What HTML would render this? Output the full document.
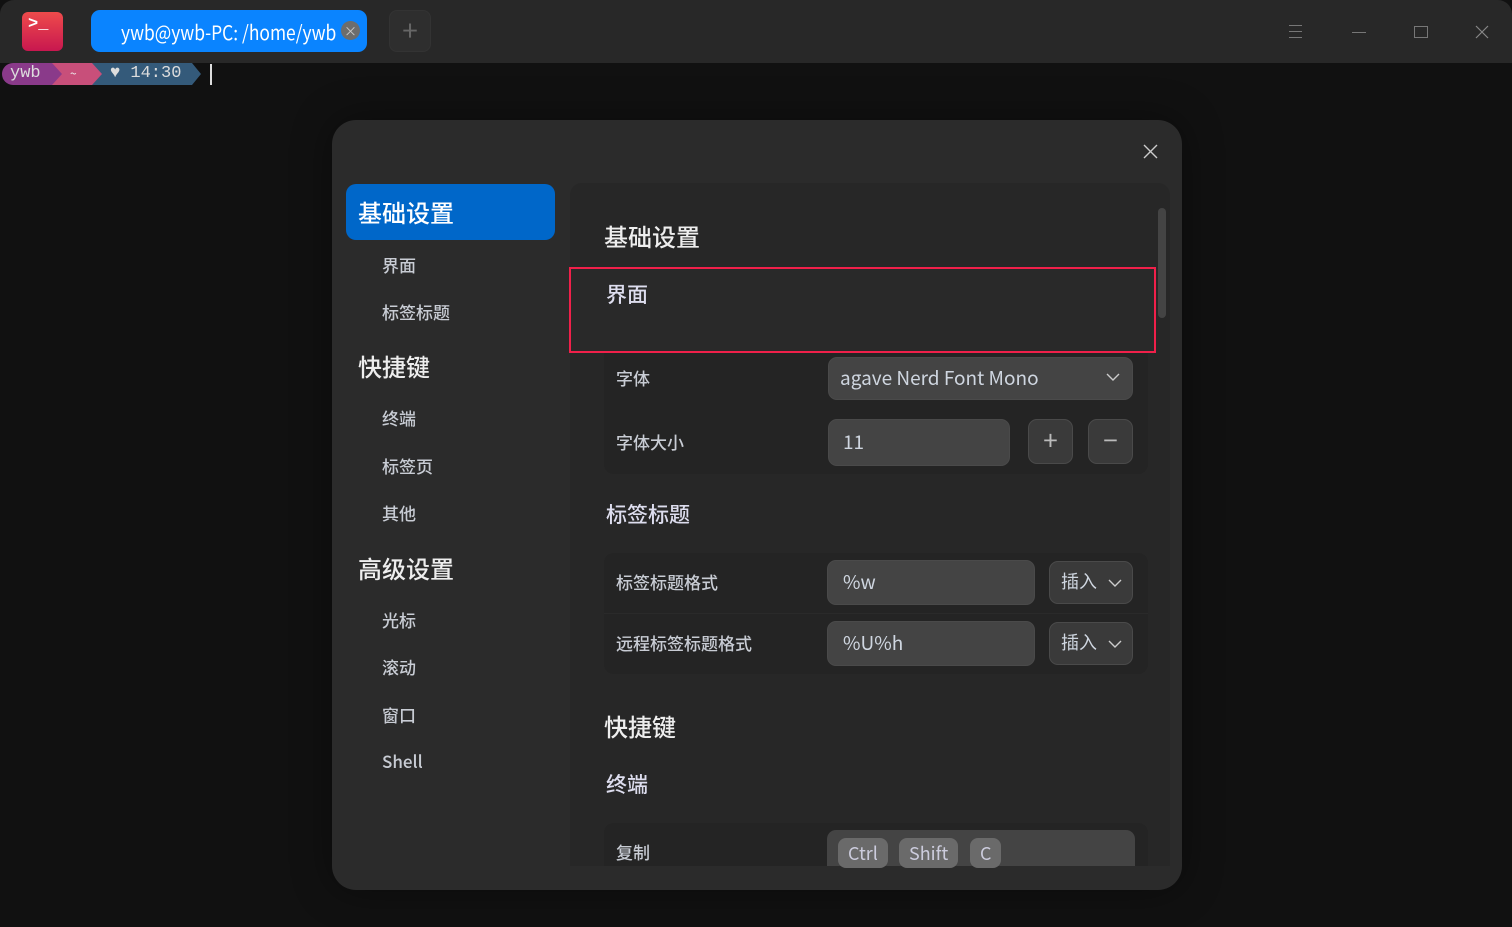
<!DOCTYPE html>
<html><head><meta charset="utf-8"><style>
*{box-sizing:border-box;margin:0;padding:0}
body{width:1512px;height:927px;background:#111;font-family:"Noto Sans CJK SC","Liberation Sans",sans-serif;line-height:1.3;position:relative;overflow:hidden;color:#ddd}
.a{position:absolute}
.tb{left:0;top:0;width:1512px;height:63px;background:#282828;border-radius:14px 14px 0 0}
.row{background:#242424;border-radius:10px}
.inp{background:#444;border-radius:9px;border:1px solid #4a4a4a}
.btn{background:#3a3a3a;border:1px solid #4a4a4a;border-radius:9px}
.lbl{font-size:17px;color:#c8ccd4;font-weight:500}
.side{font-size:17px;color:#c8ccd4;font-weight:500}
.h{font-size:24px;color:#eee;font-weight:500}
.key{background:#6a6a6a;border-radius:8px;color:#ccd;font-size:18px;height:30px;line-height:30px;padding:0 10px;top:838px}
</style></head><body>
<div class="a tb"></div>
<div class="a" style="left:22px;top:12px;width:41px;height:39px;border-radius:6px;background:linear-gradient(#ee4b4b,#c8174f)"><span class="a" style="left:6px;top:3px;color:#fff;font:bold 17px 'Liberation Mono',monospace">&gt;_</span></div>
<div class="a" style="left:91px;top:10px;width:276px;height:42px;border-radius:9px;background:#0a84ff"></div>
<div class="a" style="left:121px;top:18px;color:#fff;font-size:20px;line-height:28px;transform:scaleX(0.87);transform-origin:left;white-space:nowrap">ywb@ywb-PC: /home/ywb</div>
<div class="a" style="left:341px;top:21px;width:19px;height:19px;border-radius:50%;background:#6d6d6d;color:#ccc;font-size:13px;text-align:center;line-height:19px">×</div>
<div class="a" style="left:389px;top:10px;width:42px;height:42px;border-radius:8px;background:#2e2e2e;border:1px solid #333;color:#666;font-size:28px;text-align:center;line-height:38px">+</div>
<div class="a" style="left:1289px;top:25px;width:13px;height:13px;border-top:1px solid #777;border-bottom:1px solid #777"><div style="margin-top:5px;border-top:1px solid #777"></div></div>
<div class="a" style="left:1352px;top:32px;width:14px;border-top:1px solid #777"></div>
<div class="a" style="left:1414px;top:26px;width:14px;height:12px;border:1px solid #777"></div>
<svg class="a" style="left:1475px;top:25px" width="14" height="14"><path d="M1 1l12 12M13 1L1 13" stroke="#888" stroke-width="1.2"/></svg>
<div class="a" style="left:2px;top:63px;width:50px;height:22px;background:#8a3a8a;border-radius:11px 0 0 11px;color:#ddd;font:17px 'Liberation Mono',monospace;padding-left:8px;line-height:22px">ywb</div>
<div class="a" style="left:52px;top:63px;width:40px;height:22px;background:#c84f7a;color:#eee;font-size:12px;padding-left:18px;line-height:22px">~</div>
<div class="a" style="left:52px;top:63px;width:0;height:0;border-top:11px solid transparent;border-bottom:11px solid transparent;border-left:10px solid #8a3a8a"></div>
<div class="a" style="left:92px;top:63px;width:100px;height:22px;background:#345a7a;color:#ddd;font:17px 'Liberation Mono',monospace;padding-left:18px;line-height:22px">♥ 14:30</div>
<div class="a" style="left:92px;top:63px;width:0;height:0;border-top:11px solid transparent;border-bottom:11px solid transparent;border-left:10px solid #c84f7a"></div>
<div class="a" style="left:192px;top:63px;width:0;height:0;border-top:11px solid transparent;border-bottom:11px solid transparent;border-left:9px solid #345a7a"></div>
<div class="a" style="left:210px;top:64px;width:2px;height:21px;background:#ddd"></div>
<div class="a" style="left:332px;top:120px;width:850px;height:770px;background:#2b2b2b;border-radius:24px;box-shadow:0 0 40px rgba(0,0,0,.4)"></div>
<svg class="a" style="left:1143px;top:144px" width="15" height="15"><path d="M1 1l13 13M14 1L1 14" stroke="#ccc" stroke-width="1.4"/></svg>
<div class="a" style="left:570px;top:183px;width:600px;height:683px;background:#272727;border-radius:12px 12px 0 0"></div>
<div class="a" style="left:1158px;top:208px;width:8px;height:110px;background:#444;border-radius:4px"></div>
<div class="a" style="left:346px;top:184px;width:209px;height:56px;background:#0067c9;border-radius:10px"></div>
<div class="a" style="left:358px;top:196px;color:#fff;font-size:24px;font-weight:500">基础设置</div>
<div class="a side" style="left:382px;top:254px">界面</div>
<div class="a side" style="left:382px;top:301px">标签标题</div>
<div class="a h" style="left:358px;top:350px">快捷键</div>
<div class="a side" style="left:382px;top:407px">终端</div>
<div class="a side" style="left:382px;top:455px">标签页</div>
<div class="a side" style="left:382px;top:502px">其他</div>
<div class="a h" style="left:358px;top:552px">高级设置</div>
<div class="a side" style="left:382px;top:609px">光标</div>
<div class="a side" style="left:382px;top:656px">滚动</div>
<div class="a side" style="left:382px;top:704px">窗口</div>
<div class="a side" style="left:382px;top:750px">Shell</div>
<div class="a h" style="left:604px;top:220px">基础设置</div>
<div class="a row" style="left:604px;top:332px;width:544px;height:142px"></div>
<div class="a" style="left:569px;top:267px;width:587px;height:86px;border:2px solid #f0204a;background:#292929"></div>
<div class="a" style="left:606px;top:281px;font-size:21px;color:#dde;font-weight:500">界面</div>
<div class="a lbl" style="left:616px;top:367px">字体</div>
<div class="a inp" style="left:828px;top:357px;width:305px;height:43px"></div>
<div class="a" style="left:840px;top:366px;font-size:19px;color:#cfd6e0">agave Nerd Font Mono</div>
<svg class="a" style="left:1106px;top:372px" width="14" height="10"><path d="M1 2l6 6 6-6" stroke="#ccc" fill="none" stroke-width="1.4"/></svg>
<div class="a lbl" style="left:616px;top:431px">字体大小</div>
<div class="a inp" style="left:828px;top:419px;width:182px;height:47px"></div>
<div class="a" style="left:843px;top:430px;font-size:19px;color:#cfd6e0">11</div>
<div class="a btn" style="left:1028px;top:419px;width:45px;height:45px;color:#bbb;font-size:26px;text-align:center;line-height:40px">+</div>
<div class="a btn" style="left:1088px;top:419px;width:45px;height:45px;color:#bbb;font-size:26px;text-align:center;line-height:40px">−</div>
<div class="a" style="left:606px;top:501px;font-size:21px;color:#dde;font-weight:500">标签标题</div>
<div class="a row" style="left:604px;top:553px;width:544px;height:121px"></div>
<div class="a" style="left:604px;top:613px;width:544px;height:1px;background:#2a2a2a"></div>
<div class="a lbl" style="left:616px;top:571px">标签标题格式</div>
<div class="a inp" style="left:827px;top:560px;width:208px;height:45px"></div>
<div class="a" style="left:843px;top:570px;font-size:19px;color:#cfd6e0">%w</div>
<div class="a btn" style="left:1049px;top:561px;width:84px;height:43px"></div>
<div class="a" style="left:1061px;top:570px;font-size:18px;color:#cfd6e0">插入</div>
<svg class="a" style="left:1108px;top:578px" width="14" height="10"><path d="M1 2l6 6 6-6" stroke="#ccc" fill="none" stroke-width="1.4"/></svg>
<div class="a lbl" style="left:616px;top:632px">远程标签标题格式</div>
<div class="a inp" style="left:827px;top:621px;width:208px;height:45px"></div>
<div class="a" style="left:843px;top:631px;font-size:19px;color:#cfd6e0">%U%h</div>
<div class="a btn" style="left:1049px;top:622px;width:84px;height:43px"></div>
<div class="a" style="left:1061px;top:631px;font-size:18px;color:#cfd6e0">插入</div>
<svg class="a" style="left:1108px;top:639px" width="14" height="10"><path d="M1 2l6 6 6-6" stroke="#ccc" fill="none" stroke-width="1.4"/></svg>
<div class="a h" style="left:604px;top:710px">快捷键</div>
<div class="a" style="left:606px;top:771px;font-size:21px;color:#dde;font-weight:500">终端</div>
<div class="a row" style="left:604px;top:823px;width:544px;height:43px;border-radius:10px 10px 0 0"></div>
<div class="a lbl" style="left:616px;top:841px">复制</div>
<div class="a" style="left:827px;top:830px;width:308px;height:36px;background:#444;border-radius:9px 9px 0 0"></div>
<div class="a key" style="left:838px">Ctrl</div>
<div class="a key" style="left:899px">Shift</div>
<div class="a key" style="left:970px">C</div>
</body></html>
